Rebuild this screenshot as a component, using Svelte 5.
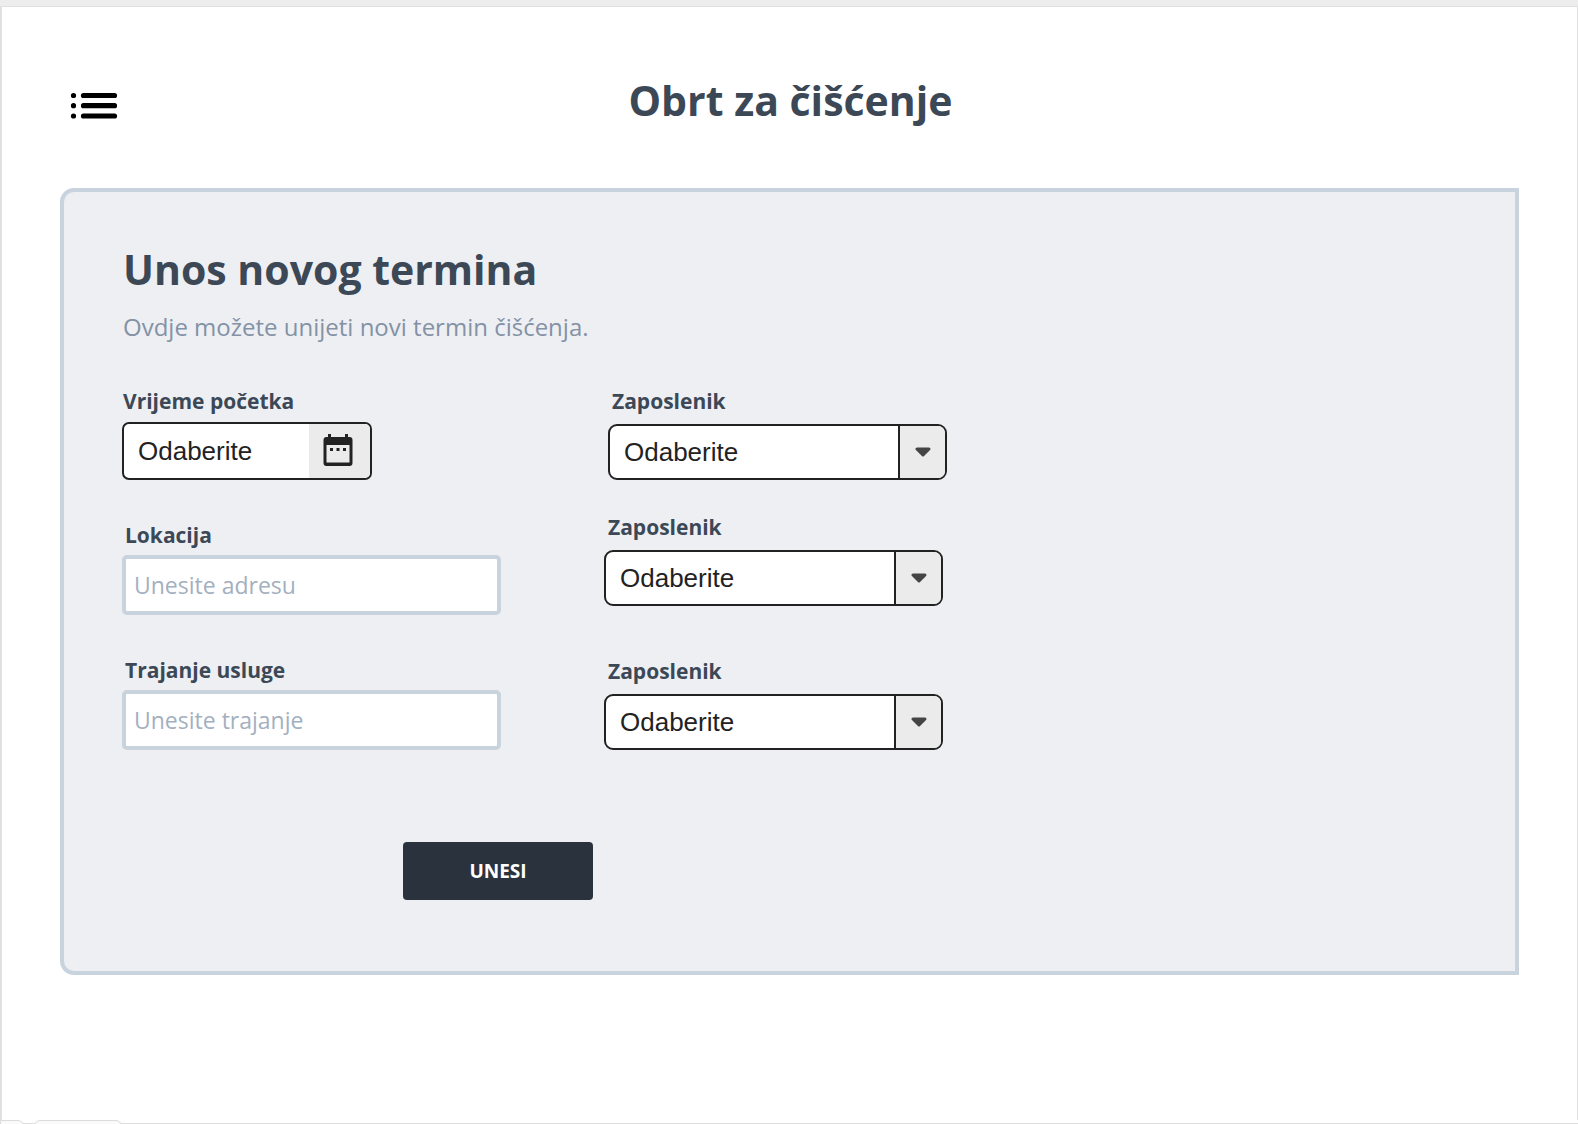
<script>
  let start = $state('');
  let location = $state('');
  let duration = $state('');
  let employees = $state(['', '', '']);
</script>

<div class="page">
  <div class="sheet">
    <header>
      <button class="menu" type="button" aria-label="Izbornik">
        <svg viewBox="0 0 48 28" width="48" height="28" aria-hidden="true">
          <g stroke="#000" stroke-width="5.200" stroke-linecap="round">
            <path d="M13.500 3.500H44.500M13.500 13.700H44.500M13.500 24H44.500" />
            <path d="M3.500 3.500h.01M3.500 13.700h.01M3.500 24h.01" />
          </g>
        </svg>
      </button>
      <h1>Obrt za čišćenje</h1>
    </header>

    <main>
      <h2>Unos novog termina</h2>
      <p>Ovdje možete unijeti novi termin čišćenja.</p>

      <form onsubmit={(e) => e.preventDefault()}>
        <div class="columns">
          <div class="details">
            <div class="field">
              <label for="start">Vrijeme početka</label>
              <div class="date">
                <input id="start" type="text" placeholder="Odaberite" bind:value={start} />
                <button type="button" aria-label="Otvori kalendar">
                  <svg viewBox="0 0 30 34" width="30" height="34" aria-hidden="true">
                    <path
                      fill="#222"
                      fill-rule="evenodd"
                      d="M5 1h3v3h14V1h3v3h1.500a3 3 0 0 1 3 3v23a3 3 0 0 1-3 3h-23a3 3 0 0 1-3-3V7a3 3 0 0 1 3-3H5zM3.500 12v17.500h23V12z"
                    />
                    <path fill="#222" d="M7 15h3v3H7zM13.500 15h3v3h-3zM20 15h3v3h-3z" />
                  </svg>
                </button>
              </div>
            </div>
            <div class="field">
              <label class="inset" for="location">Lokacija</label>
              <input class="text" id="location" type="text" placeholder="Unesite adresu" bind:value={location} />
            </div>
            <div class="field">
              <label class="inset" for="duration">Trajanje usluge</label>
              <input class="text" id="duration" type="text" placeholder="Unesite trajanje" bind:value={duration} />
            </div>
          </div>

          <div class="staff">
            {#each employees as _, i}
              <div class="field">
                <label for="employee-{i}">Zaposlenik</label>
                <div class="select">
                  <select id="employee-{i}" bind:value={employees[i]}>
                    <option value="">Odaberite</option>
                  </select>
                  <span class="arrow">
                    <svg viewBox="0 0 16 10" width="16" height="10" aria-hidden="true">
                      <path d="M2 2H14L8 8z" fill="#444" stroke="#444" stroke-width="3" stroke-linejoin="round" />
                    </svg>
                  </span>
                </div>
              </div>
            {/each}
          </div>
        </div>
        <button class="submit" type="submit">UNESI</button>
      </form>
    </main>
  </div>
  <div class="tabs"><span class="first"></span><span class="second"></span></div>
</div>

<style>
  :global(body) {
    margin: 0;
    background: #ededed;
  }
  .page,
  .page * {
    box-sizing: border-box;
  }
  .page {
    display: flex;
    flex-direction: column;
    min-height: 100vh;
    padding-top: 6px;
    font-family: 'Open Sans', 'Noto Sans', sans-serif;
    color: #3c4856;
  }
  .sheet {
    flex: 1;
    padding: 0 58px;
    background: #fff;
    border: solid #e0e0e0;
    border-width: 1px 1px 0 2px;
  }
  header {
    display: grid;
    grid-template-columns: 64px 1fr 64px;
    align-items: center;
    height: 181px;
  }
  .menu {
    display: flex;
    margin: 16px 0 0 10px;
    padding: 0;
    border: 0;
    background: none;
    cursor: pointer;
  }
  h1,
  h2 {
    margin: 0;
    font-size: 41px;
    line-height: 56px;
    font-weight: 700;
  }
  h1 {
    padding: 4px 0 0 2px;
    text-align: center;
  }
  main {
    padding: 49px 58px 71px;
    background: #edeff3;
    border: 4px solid #c8d3de;
    border-radius: 14px 0 0 14px;
  }
  h2,
  p {
    padding-left: 1px;
  }
  p {
    margin: 12px 0 41px;
    font-size: 24px;
    line-height: 36px;
    color: #8492a6;
  }
  .columns {
    display: flex;
    flex-wrap: wrap;
    gap: 40px 103px;
  }
  .details {
    display: flex;
    flex-direction: column;
    gap: 40px;
    flex: 0 1 379px;
  }
  .staff {
    flex: 0 1 343px;
  }
  .field {
    display: flex;
    flex-direction: column;
    gap: 5px;
  }
  .details .field:first-child {
    gap: 6px;
  }
  .staff .field {
    gap: 8px;
    margin: 0 4px 50px 0;
  }
  .staff .field:first-child {
    margin: 0 0 32px 4px;
  }
  .staff .field:last-child {
    margin-bottom: 0;
  }
  label {
    padding-left: 1px;
    font-size: 21px;
    line-height: 30px;
    font-weight: 700;
  }
  .inset {
    padding-left: 3px;
  }
  .staff label {
    padding-left: 4px;
  }
  input,
  select {
    min-width: 0;
    margin: 0;
    outline-offset: 2px;
  }
  .date {
    display: flex;
    width: 250px;
    height: 58px;
    overflow: hidden;
    background: #fff;
    border: 2px solid #222;
    border-radius: 7px;
  }
  .date input {
    flex: 1;
    padding: 0 0 0 14px;
    border: 0;
    background: none;
  }
  .date input,
  select {
    font-family: 'Liberation Sans', Arial, sans-serif;
    font-size: 26px;
    color: #222;
  }
  .date input::placeholder {
    color: #222;
    opacity: 1;
  }
  .date button {
    display: flex;
    align-items: center;
    justify-content: center;
    width: 61px;
    padding: 0 3px 2px 0;
    border: 0;
    background: #ebebeb;
  }
  .text {
    width: 100%;
    height: 60px;
    padding: 0 8px;
    font-family: inherit;
    font-size: 23px;
    color: #3c4856;
    background: #fff;
    border: 4px solid #c8d3de;
    border-radius: 5px;
  }
  .text::placeholder {
    color: #a3b0c0;
    opacity: 1;
  }
  .select {
    display: grid;
    grid-template-columns: 1fr 47px;
    height: 56px;
    overflow: hidden;
    background: #fff;
    border: 2px solid #222;
    border-radius: 9px;
  }
  select {
    grid-area: 1 / 1 / 2 / 3;
    padding: 0 60px 0 14px;
    border: 0;
    appearance: none;
    background: none;
  }
  .arrow {
    grid-area: 1 / 2;
    display: flex;
    align-items: center;
    justify-content: center;
    background: #ebebeb;
    border-left: 2px solid #222;
    pointer-events: none;
  }
  .submit {
    display: block;
    width: 190px;
    height: 58px;
    margin: 92px 0 0 281px;
    border: 0;
    border-radius: 4px;
    background: #2a323d;
    color: #fff;
    font-family: inherit;
    font-size: 19px;
    font-weight: 700;
    cursor: pointer;
  }
  .tabs {
    display: flex;
    gap: 10px;
    height: 4px;
    overflow: hidden;
    background: linear-gradient(#fff 3px, #dedede 3px);
  }
  .tabs span {
    height: 12px;
    background: #fafafa;
    border: 1px solid #dcdcdc;
  }
  .first {
    width: 24px;
    border-radius: 0 6px 0 0;
  }
  .second {
    width: 88px;
    border-radius: 6px 6px 0 0;
  }
</style>
